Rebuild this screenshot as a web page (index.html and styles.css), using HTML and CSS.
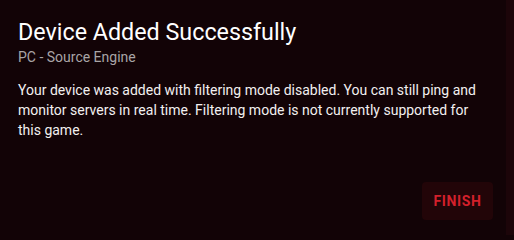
FILE: index.html
```html
<!DOCTYPE html>
<html>
<head>
<meta charset="utf-8">
<link rel="stylesheet" href="styles.css">
</head>
<body>
<div class="page">
  <div class="dialog">
    <div class="header">
      <h1 class="title">Device Added Successfully</h1>
      <div class="subtitle">PC - Source Engine</div>
    </div>
    <p class="body">Your device was added with filtering mode disabled. You can still ping and monitor servers in real time. Filtering mode is not currently supported for this game.</p>
    <div class="actions">
      <button class="finish">FINISH</button>
    </div>
  </div>
  <div class="backdrop"></div>
</div>
</body>
</html>
```
FILE: styles.css
```css
html, body {
  margin: 0;
  padding: 0;
  background: #120306;
}
.page {
  display: flex;
  width: 514px;
  height: 235px;
  font-family: Roboto, "Liberation Sans", sans-serif;
}
.dialog {
  width: 506px;
  box-sizing: border-box;
  padding: 16px 13px 0 18px;
  background: #120306;
  display: flex;
  flex-direction: column;
}
.backdrop {
  flex: 1;
  background: #1c0509;
}
.title {
  margin: 0;
  font-size: 23.3px;
  font-weight: 400;
  color: #ffffff;
  line-height: 32px;
}
.subtitle {
  margin-top: 1px;
  font-size: 14px;
  color: #a9a5a6;
  line-height: 16px;
}
.body {
  margin: 15px 0 0 0;
  font-size: 14px;
  line-height: 20px;
  color: #f2f0f0;
}
.actions {
  display: flex;
  justify-content: flex-end;
  margin-top: 42px;
}
.finish {
  width: 71px;
  height: 38px;
  border: none;
  border-radius: 4px;
  background: #220508;
  color: #d3202b;
  font-family: Roboto, "Liberation Sans", sans-serif;
  font-weight: 700;
  font-size: 14px;
  letter-spacing: 0.6px;
  padding: 0;
}
```
